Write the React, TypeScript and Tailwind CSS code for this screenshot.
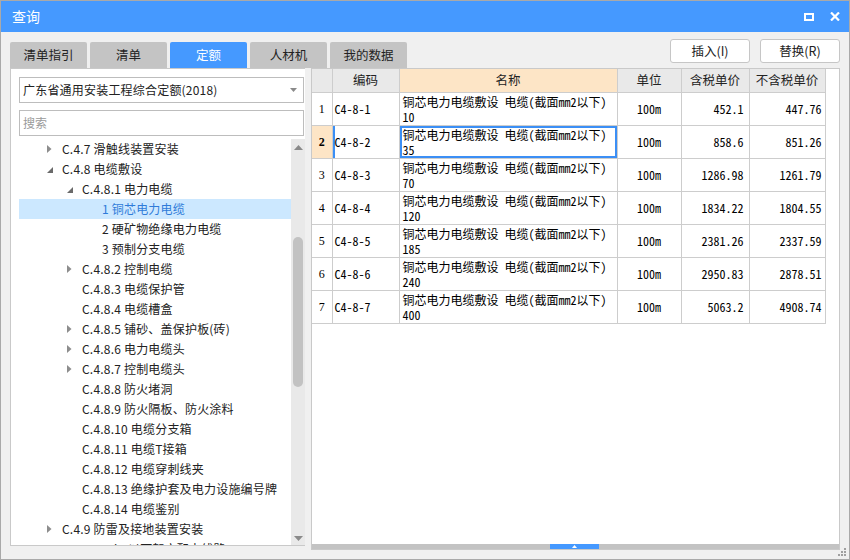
import { FC } from 'react';

const UI = "font-['Noto_Sans_CJK_SC','Noto_Sans',sans-serif]";
const MONO = "font-['Noto_Sans_Mono_CJK_SC','Liberation_Mono','Noto_Sans_CJK_SC',monospace]";

const tabs = ['清单指引', '清单', '定额', '人材机', '我的数据'];

type Node = { level: number; label: string; arrow?: 'open' | 'closed'; selected?: boolean };

const tree: Node[] = [
  { level: 1, label: 'C.4.7 滑触线装置安装', arrow: 'closed' },
  { level: 1, label: 'C.4.8 电缆敷设', arrow: 'open' },
  { level: 2, label: 'C.4.8.1 电力电缆', arrow: 'open' },
  { level: 3, label: '1 铜芯电力电缆', selected: true },
  { level: 3, label: '2 硬矿物绝缘电力电缆' },
  { level: 3, label: '3 预制分支电缆' },
  { level: 2, label: 'C.4.8.2 控制电缆', arrow: 'closed' },
  { level: 2, label: 'C.4.8.3 电缆保护管' },
  { level: 2, label: 'C.4.8.4 电缆槽盒' },
  { level: 2, label: 'C.4.8.5 铺砂、盖保护板(砖)', arrow: 'closed' },
  { level: 2, label: 'C.4.8.6 电力电缆头', arrow: 'closed' },
  { level: 2, label: 'C.4.8.7 控制电缆头', arrow: 'closed' },
  { level: 2, label: 'C.4.8.8 防火堵洞' },
  { level: 2, label: 'C.4.8.9 防火隔板、防火涂料' },
  { level: 2, label: 'C.4.8.10 电缆分支箱' },
  { level: 2, label: 'C.4.8.11 电缆T接箱' },
  { level: 2, label: 'C.4.8.12 电缆穿刺线夹' },
  { level: 2, label: 'C.4.8.13 绝缘护套及电力设施编号牌' },
  { level: 2, label: 'C.4.8.14 电缆鉴别' },
  { level: 1, label: 'C.4.9 防雷及接地装置安装', arrow: 'closed' },
  { level: 1, label: 'C.4.10 10kV以下架空配电线路', arrow: 'closed' },
];

const rows = [
  ['C4-8-1', '10', '452.1', '447.76'],
  ['C4-8-2', '35', '858.6', '851.26'],
  ['C4-8-3', '70', '1286.98', '1261.79'],
  ['C4-8-4', '120', '1834.22', '1804.55'],
  ['C4-8-5', '185', '2381.26', '2337.59'],
  ['C4-8-6', '240', '2950.83', '2878.51'],
  ['C4-8-7', '400', '5063.2', '4908.74'],
];

const indent: Record<number, string> = { 1: 'pl-[27px]', 2: 'pl-[47px]', 3: 'pl-[67px]' };

const TreeRow: FC<{ node: Node }> = ({ node }) => (
  <div
    className={`flex h-[20px] shrink-0 items-center whitespace-nowrap text-[12px] ${indent[node.level]} ${
      node.selected ? 'bg-[#cce8ff] text-[#2f7bd9]' : 'text-[#222]'
    }`}
  >
    <span className="flex w-[16px] shrink-0 items-center pl-[1px]">
      {node.arrow === 'closed' && (
        <svg width="5" height="8" viewBox="0 0 5 8">
          <path d="M0 0L4.5 4L0 8Z" fill="#8d8d8d" />
        </svg>
      )}
      {node.arrow === 'open' && (
        <svg width="6" height="6" viewBox="0 0 6 6" className="mt-[2px]">
          <path d="M6 0V6H0Z" fill="#6a6a6a" />
        </svg>
      )}
    </span>
    <span className="tracking-[0.2px]">{node.label}</span>
  </div>
);

const hd = 'border border-t-0 border-[#cdcdcd] h-[23px] text-center font-normal text-[12.5px] text-[#222] bg-[#e9e9e9]';
const td = 'border border-[#cdcdcd] h-[33px] text-[12px] text-black';

export default function App() {
  return (
    <div className={`relative flex h-[560px] w-[850px] flex-col border border-[#a9a9a9] bg-[#f0f0f0] ${UI}`}>
      {/* title bar */}
      <div className="flex h-[31px] shrink-0 items-center justify-between bg-[#4599ff] pl-[11px] pr-[9px] text-white">
        <span className="text-[14px]">查询</span>
        <div className="flex items-center gap-[16px]">
          <svg width="10" height="8" viewBox="0 0 10 8">
            <rect x="1" y="1" width="8" height="6" fill="none" stroke="#fff" strokeWidth="2" />
          </svg>
          <svg width="10" height="9" viewBox="0 0 10 9">
            <path d="M1 0.5L9 8.5M9 0.5L1 8.5" stroke="#fff" strokeWidth="2.2" />
          </svg>
        </div>
      </div>

      {/* tabs + buttons */}
      <div className="flex h-[36px] shrink-0 justify-between px-[9px] pt-[7px]">
        <div className="flex items-end gap-[3px]">
          {tabs.map((t) => (
            <div
              key={t}
              className={`flex h-[26px] w-[77px] items-center justify-center rounded-t-[2px] text-[12.5px] ${
                t === '定额' ? 'bg-[#4599ff] text-white' : 'bg-[#c4c4c4] text-[#222]'
              }`}
            >
              {t}
            </div>
          ))}
        </div>
        <div className="flex gap-[10px]">
          {['插入(I)', '替换(R)'].map((b) => (
            <button
              key={b}
              className="h-[24px] w-[80px] rounded-[3px] border border-[#c6c6c6] bg-white text-[12.5px] text-[#222]"
            >
              {b}
            </button>
          ))}
        </div>
      </div>

      {/* main */}
      <div className="flex items-start gap-[6px] px-[9px]">
        {/* left panel */}
        <div className="flex h-[478px] w-[295px] shrink-0 flex-col border border-r-0 border-[#c9c9c9] bg-white">
          <div className="ml-[8px] mt-[8px] flex h-[26px] w-[285px] items-center justify-between border border-[#bdbdbd] pl-[3px] pr-[6px] text-[12px] text-[#222]">
            <span className="tracking-[0.2px]">广东省通用安装工程综合定额(2018)</span>
            <svg width="7" height="4" viewBox="0 0 7 4">
              <path d="M0 0H7L3.5 4Z" fill="#8a8a8a" />
            </svg>
          </div>
          <div className="ml-[8px] mt-[7px] flex h-[26px] w-[285px] items-center border border-[#bdbdbd] pl-[3px] text-[12px] text-[#9a9a9a]">
            搜索
          </div>
          <div className="mt-[3px] flex min-h-0 flex-1">
            <div className="flex min-w-0 flex-1 flex-col overflow-hidden pl-[8px]">
              {tree.map((n, i) => (
                <TreeRow key={i} node={n} />
              ))}
            </div>
            <div className="flex w-[14px] shrink-0 flex-col items-center bg-[#e9e9e9]">
              <div className="flex h-[16px] items-center">
                <svg width="9" height="5" viewBox="0 0 9 5">
                  <path d="M0 5L4.5 0L9 5Z" fill="#8a8a8a" />
                </svg>
              </div>
              <div className="mt-[82px] h-[150px] w-[10px] rounded-full bg-[#c2c2c2]" />
              <div className="flex-1" />
              <div className="flex h-[14px] items-center">
                <svg width="9" height="5" viewBox="0 0 9 5">
                  <path d="M0 0L4.5 5L9 0Z" fill="#8a8a8a" />
                </svg>
              </div>
            </div>
          </div>
        </div>

        {/* right panel */}
        <div className="flex h-[482px] w-[529px] shrink-0 flex-col border border-[#c9c9c9] bg-white">
          <div className="min-h-0 flex-1 overflow-hidden">
            <table className="table-fixed border-collapse">
              <colgroup>
                <col className="w-[20px]" />
                <col className="w-[67px]" />
                <col className="w-[218px]" />
                <col className="w-[64px]" />
                <col className="w-[68px]" />
                <col className="w-[76px]" />
              </colgroup>
              <thead>
                <tr>
                  <th className={`${hd} border-l-0`} />
                  <th className={hd}>编码</th>
                  <th className={`${hd} bg-[#fde5c6] font-bold`}>名称</th>
                  <th className={hd}>单位</th>
                  <th className={hd}>含税单价</th>
                  <th className={hd}>不含税单价</th>
                </tr>
              </thead>
              <tbody className={MONO}>
                {rows.map((r, i) => {
                  const sel = i === 1;
                  return (
                    <tr key={r[0]}>
                      <td
                        className={`${td} border-l-0 text-center font-['Liberation_Serif',serif] ${
                          sel ? 'bg-[#fde5c6] font-bold' : ''
                        }`}
                      >
                        {i + 1}
                      </td>
                      <td className={`${td} pl-[2px] ${sel ? 'shadow-[inset_2px_0_0_#3b8ff5]' : ''}`}>{r[0]}</td>
                      <td
                        className={`${td} pl-[3px] pt-[1px] align-top leading-[15px] ${
                          sel ? 'shadow-[inset_0_0_0_2px_#3b8ff5]' : ''
                        }`}
                      >
                        铜芯电力电缆敷设 电缆(截面mm2以下)
                        <br />
                        {r[1]}
                      </td>
                      <td className={`${td} text-center`}>100m</td>
                      <td className={`${td} pr-[5px] text-right`}>{r[2]}</td>
                      <td className={`${td} pr-[3px] text-right`}>{r[3]}</td>
                    </tr>
                  );
                })}
              </tbody>
            </table>
          </div>
          <div className="flex h-[5px] shrink-0 bg-[#c3c3c3]">
            <div className="w-[238px]" />
            <div className="flex w-[49px] items-center justify-center bg-[#4599ff]">
              <svg width="5" height="3" viewBox="0 0 5 3">
                <path d="M0 3L2.5 0L5 3Z" fill="#fff" />
              </svg>
            </div>
          </div>
        </div>
      </div>

      {/* resize grip */}
      <svg className="absolute bottom-[2px] right-[2px]" width="9" height="9" viewBox="0 0 9 9">
        <g fill="#a0a0a0">
          <rect x="6" y="0" width="2" height="2" />
          <rect x="3" y="3" width="2" height="2" />
          <rect x="6" y="3" width="2" height="2" />
          <rect x="0" y="6" width="2" height="2" />
          <rect x="3" y="6" width="2" height="2" />
          <rect x="6" y="6" width="2" height="2" />
        </g>
      </svg>
    </div>
  );
}
